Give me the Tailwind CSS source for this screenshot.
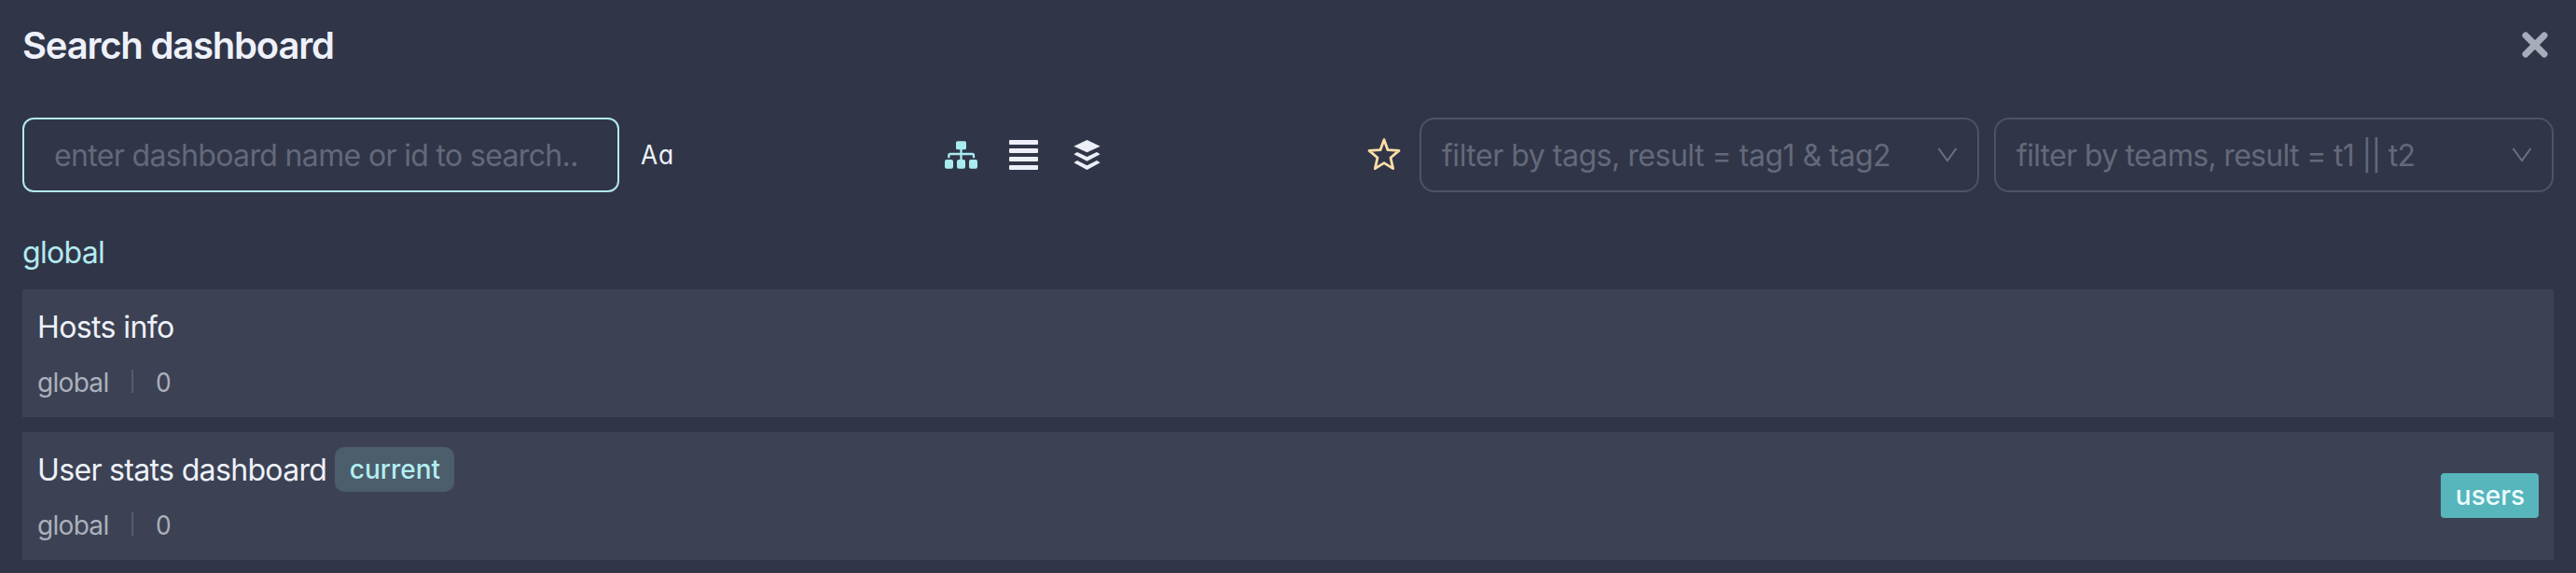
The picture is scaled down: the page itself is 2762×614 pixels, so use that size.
<!DOCTYPE html>
<html lang="en">
<head>
<meta charset="utf-8">
<title>Search dashboard</title>
<script src="https://cdn.jsdelivr.net/npm/@tailwindcss/browser@4"></script>
</head>
<body class="h-[614px] overflow-hidden bg-[#303648] px-6 pt-6 font-['Inter',sans-serif] text-[32px] leading-[48px] text-[#eef1fa]">
  <header class="flex h-[48px] items-center justify-between">
    <h1 class="pt-0.5 text-[40px] font-semibold tracking-[-1.2px]">Search dashboard</h1>
    <svg class="mr-[5px] h-[30px] w-[30px]" viewBox="0 0 30 30" stroke="#a6acba" stroke-width="7" stroke-linecap="round"><path d="M5 5 25 25M25 5 5 25"/></svg>
  </header>

  <div class="mt-[54px] flex h-20 items-center">
    <div class="flex h-20 w-[640px] items-center rounded-xl border-2 border-[#b4e8ef] pt-0.5 pl-8 tracking-[-0.65px] whitespace-nowrap text-[#646979]">enter dashboard name or id to search..</div>
    <div class="ml-[23px] w-10 origin-left scale-x-[.94] text-[28px] tracking-[1px] [font-feature-settings:'cv11']">Aa</div>
    <div class="ml-[286px] flex items-center">
      <svg class="h-[30px] w-[35px]" viewBox="0 0 105 90" fill="#a8ebf0"><rect x="36" y="1" width="33" height="27" rx="5"/><rect x="0" y="60" width="27" height="29" rx="6"/><rect x="39" y="60" width="27" height="29" rx="6"/><rect x="78" y="60" width="27" height="29" rx="6"/><path d="M52.500 26v36M13 55V46q0-4 4-4h72q4 0 4 4v9" fill="none" stroke="#a8ebf0" stroke-width="7"/></svg>
      <svg class="ml-[34px] h-8 w-[31px]" viewBox="0 0 31 32" fill="#eceff8"><rect width="31" height="5" rx="1"/><rect y="9" width="31" height="5" rx="1"/><rect y="18" width="31" height="5" rx="1"/><rect y="27" width="31" height="5" rx="1"/></svg>
      <svg class="ml-[38px] h-8 w-[29px]" viewBox="0 0 87 96" fill="#eceff8"><path d="M43.500 0 86 20 43.500 40 1 20Z"/><path d="M1 46 12 39 43.500 54 75 39 86 46 43.500 68Z"/><path d="M1 73 12 66 43.500 82 75 66 86 73 43.500 96Z"/></svg>
    </div>
    <svg class="mb-0.5 ml-auto h-9 w-9" viewBox="0 0 108 108" fill="none" stroke="#fbdda6" stroke-width="8.500" stroke-linejoin="round"><path d="M54 8 66 41 102 43 75 66 83 101 54 83 25 101 33 66 6 43 42 41Z"/></svg>
    <div class="ml-5 flex h-20 w-[600px] items-center justify-between rounded-2xl border-2 border-[#4e5467] pr-[22px] pl-[22px] text-[#646979]">
      <span class="pt-0.5 tracking-[-0.48px]">filter by tags, result = tag1 &amp; tag2</span>
      <svg class="h-4 w-5" viewBox="0 0 20 16" fill="none" stroke="#6a7082" stroke-width="2"><path d="M.5 1 10 14 19.500 1"/></svg>
    </div>
    <div class="ml-4 flex h-20 w-[600px] items-center justify-between rounded-2xl border-2 border-[#4e5467] pr-[22px] pl-[22px] text-[#646979]">
      <span class="pt-0.5 tracking-[-0.68px]">filter by teams, result = t1 || t2</span>
      <svg class="h-4 w-5" viewBox="0 0 20 16" fill="none" stroke="#6a7082" stroke-width="2"><path d="M.5 1 10 14 19.500 1"/></svg>
    </div>
  </div>

  <h2 class="mt-[41px] tracking-[-0.7px] text-[#b4eaf0]">global</h2>

  <main class="mt-[15px] flex flex-col gap-4">
    <article class="flex h-[137px] items-center justify-between bg-[#3c4253] px-4">
      <div>
        <div class="flex h-12 items-center pt-0.5 tracking-[-0.6px]">Hosts info</div>
        <div class="mt-[15px] flex h-[42px] items-center text-[28px] text-[#abb0be]">
          <span class="w-[101px] tracking-[-0.7px]">global</span><span class="mb-1 h-[25px] w-[26px] border-l-2 border-[#575c6d]"></span><span class="origin-left scale-x-[.94]">0</span>
        </div>
      </div>
    </article>
    <article class="flex h-[137px] items-center justify-between bg-[#3c4253] px-4">
      <div>
        <div class="flex h-12 items-center"><span class="w-[319px] pt-0.5 whitespace-nowrap tracking-[-0.66px]">User stats dashboard</span><span class="flex h-12 w-32 items-center justify-center rounded-[10px] bg-[#4c5d6c] pl-px text-[28px] font-medium text-[#b2edf1]">current</span></div>
        <div class="mt-[15px] flex h-[42px] items-center text-[28px] text-[#abb0be]">
          <span class="w-[101px] tracking-[-0.7px]">global</span><span class="mb-1 h-[25px] w-[26px] border-l-2 border-[#575c6d]"></span><span class="origin-left scale-x-[.94]">0</span>
        </div>
      </div>
      <span class="mb-0.5 flex h-12 w-[105px] items-center justify-center rounded bg-[#57b5bc] pl-px text-[28px] font-medium text-[#ecfdff]">users</span>
    </article>
  </main>
</body>
</html>
